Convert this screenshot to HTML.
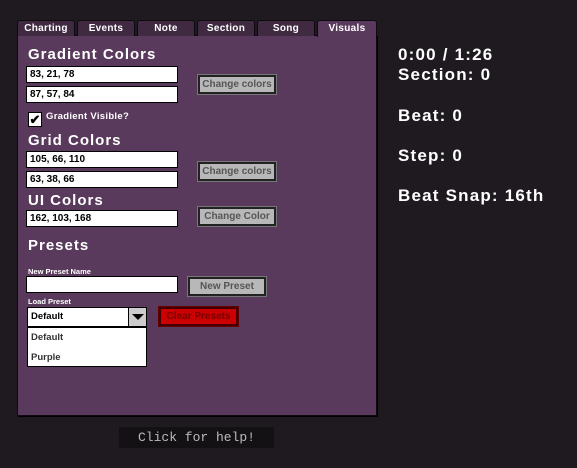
<!DOCTYPE html>
<html><head><style>
*{margin:0;padding:0;box-sizing:border-box}
body{width:577px;height:468px;background:#1e1a1f;position:relative;overflow:hidden;font-family:"Liberation Sans",sans-serif;font-weight:bold}
.a{position:absolute}
.tab{position:absolute;top:20px;height:16px;width:58px;background:#3f2a42;border:1px solid #0e0a0f;border-bottom:none;color:#fff;font-size:10px;letter-spacing:0.3px;text-align:center;line-height:15px;border-radius:3px 3px 0 0}
.panel{left:17px;top:35px;width:360px;height:381px;background:#5a3a5c;border:1px solid #0e0a0f;box-shadow:1px 1px 0 #000}
.h{color:#fff;font-size:15px;letter-spacing:1px}
.in{position:absolute;left:26px;width:152px;height:17px;background:#fff;border:1px solid #000;font-size:10px;color:#000;padding-left:3px;line-height:15px}
.btn{position:absolute;background:#b8b8b8;border:2px solid #222;outline:1px solid #777;color:#555;font-size:10px;text-align:center;line-height:15px}
.r{color:#fff;font-size:17px;left:398px;letter-spacing:1.2px}
</style></head><body>
<div class="a panel"></div>
<div class="tab" style="left:17px">Charting</div>
<div class="tab" style="left:77px">Events</div>
<div class="tab" style="left:137px">Note</div>
<div class="tab" style="left:197px">Section</div>
<div class="tab" style="left:257px">Song</div>
<div class="tab" style="left:317px;width:60px;background:#5a3a5c;height:17px">Visuals</div>

<div class="a h" style="left:28px;top:46px">Gradient Colors</div>
<div class="in" style="top:66px">83, 21, 78</div>
<div class="in" style="top:86px">87, 57, 84</div>
<div class="btn" style="left:198px;top:75px;width:78px;height:19px">Change colors</div>
<div class="a" style="left:28px;top:112px;width:14px;height:15px;background:#fff;border:1px solid #000;font-size:13px;line-height:13px;color:#000;text-align:center">✔</div>
<div class="a" style="left:46px;top:111px;color:#fff;font-size:9.5px;letter-spacing:0.3px">Gradient Visible?</div>

<div class="a h" style="left:28px;top:132px">Grid Colors</div>
<div class="in" style="top:151px">105, 66, 110</div>
<div class="in" style="top:171px">63, 38, 66</div>
<div class="btn" style="left:198px;top:162px;width:78px;height:19px">Change colors</div>

<div class="a h" style="left:28px;top:192px">UI Colors</div>
<div class="in" style="top:210px">162, 103, 168</div>
<div class="btn" style="left:198px;top:207px;width:78px;height:19px">Change Color</div>

<div class="a h" style="left:28px;top:237px">Presets</div>
<div class="a" style="left:28px;top:267px;color:#fff;font-size:7.5px">New Preset Name</div>
<div class="in" style="top:276px"></div>
<div class="btn" style="left:188px;top:277px;width:78px;height:19px">New Preset</div>
<div class="a" style="left:28px;top:297px;color:#fff;font-size:7.5px">Load Preset</div>
<div class="a" style="left:27px;top:307px;width:120px;height:20px;background:#fff;border:1px solid #000;font-size:9.5px;color:#000;padding-left:3px;line-height:18px">Default</div>
<div class="a" style="left:128px;top:307px;width:19px;height:20px;background:#ccc;border:1px solid #000"><div style="margin:6px 0 0 3px;width:0;height:0;border-left:6px solid transparent;border-right:6px solid transparent;border-top:6px solid #000"></div></div>
<div class="btn" style="left:159px;top:307px;width:79px;height:19px;background:#c00;border-color:#400;outline-color:#600;color:#700">Clear Presets</div>
<div class="a" style="left:27px;top:327px;width:120px;height:40px;background:#fff;border:1px solid #000;font-size:9.5px;color:#333;padding-left:3px;line-height:20px">Default<br>Purple</div>

<div class="a" style="left:119px;top:427px;width:155px;height:21px;background:#141114;color:#bbb;font-family:'Liberation Mono',monospace;font-weight:normal;font-size:13px;line-height:21px;text-align:center">Click for help!</div>

<div class="a r" style="top:45px">0:00 / 1:26</div>
<div class="a r" style="top:65px">Section: 0</div>
<div class="a r" style="top:106px">Beat: 0</div>
<div class="a r" style="top:146px">Step: 0</div>
<div class="a r" style="top:186px">Beat Snap: 16th</div>
</body></html>
